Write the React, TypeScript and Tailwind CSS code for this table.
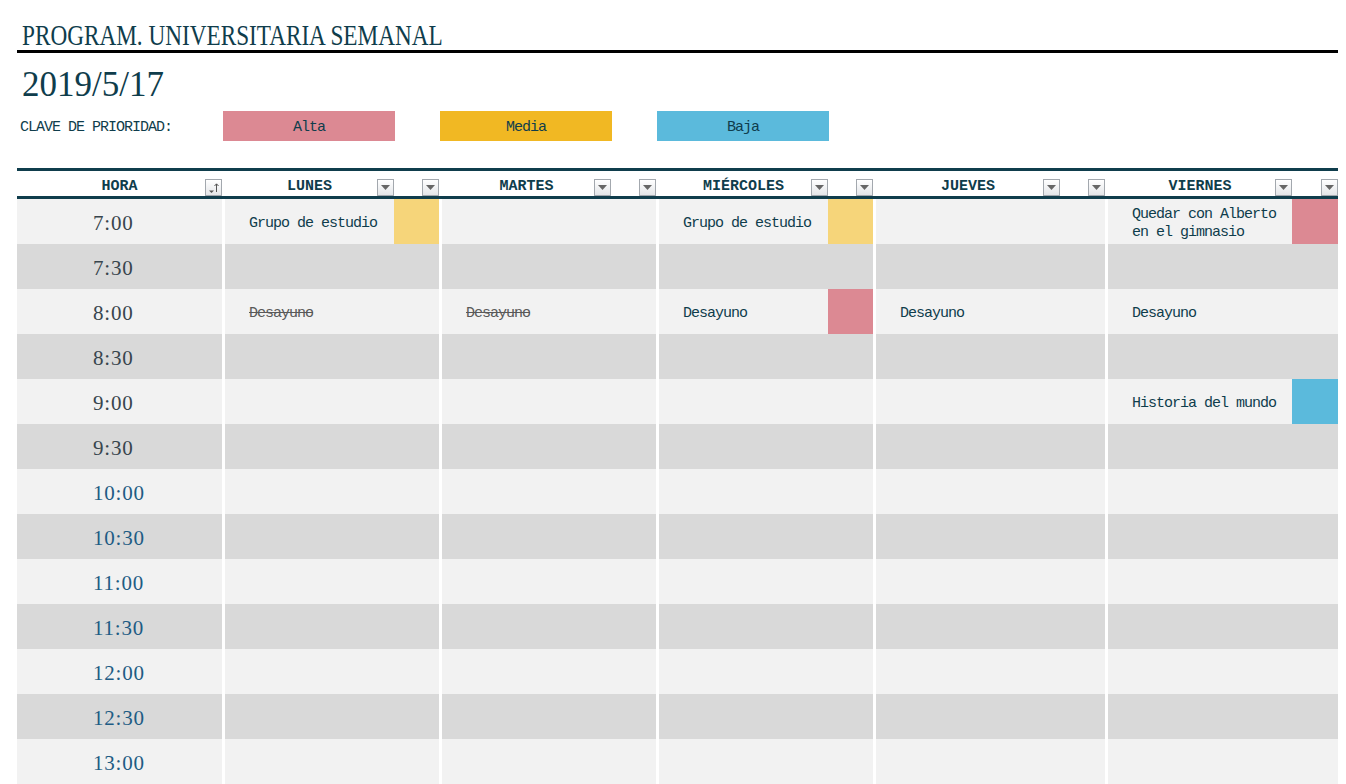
type Pri = 'alta' | 'media' | 'baja'
type Entry = { text: string; done?: boolean; pri?: Pri }
type Day = { name: string; textW: string; priW: string; entries: Record<number, Entry> }

const priBg: Record<Pri, string> = {
  alta: 'bg-[#dc8993]',
  media: 'bg-[#f6d57a]',
  baja: 'bg-[#5bbadc]',
}

const times = ['7:00', '7:30', '8:00', '8:30', '9:00', '9:30', '10:00', '10:30', '11:00', '11:30', '12:00', '12:30', '13:00']

const days: Day[] = [
  {
    name: 'LUNES', textW: 'w-[169px]', priW: 'w-[45px]',
    entries: { 0: { text: 'Grupo de estudio', pri: 'media' }, 2: { text: 'Desayuno', done: true } },
  },
  {
    name: 'MARTES', textW: 'w-[169px]', priW: 'w-[45px]',
    entries: { 2: { text: 'Desayuno', done: true } },
  },
  {
    name: 'MIÉRCOLES', textW: 'w-[169px]', priW: 'w-[45px]',
    entries: { 0: { text: 'Grupo de estudio', pri: 'media' }, 2: { text: 'Desayuno', pri: 'alta' } },
  },
  {
    name: 'JUEVES', textW: 'w-[184px]', priW: 'w-[45px]',
    entries: { 2: { text: 'Desayuno' } },
  },
  {
    name: 'VIERNES', textW: 'w-[184px]', priW: 'w-[46px]',
    entries: {
      0: { text: 'Quedar con Alberto\nen el gimnasio', pri: 'alta' },
      2: { text: 'Desayuno' },
      4: { text: 'Historia del mundo', pri: 'baja' },
    },
  },
]

function FilterButton({ sort }: { sort?: boolean }) {
  return (
    <div className="absolute right-0 bottom-0 w-[17px] h-[17px] border border-[#a3a8ae] bg-gradient-to-b from-white to-[#e4e6e9] flex items-center justify-center">
      {sort ? (
        <svg width="13" height="13" viewBox="0 0 13 13">
          <path d="M2 9.5h5l-2.5 2.5z" fill="#555" />
          <path d="M9.5 3v8" stroke="#555" strokeWidth="1" />
          <path d="M7.5 5l2-2.2 2 2.2" stroke="#555" strokeWidth="1" fill="none" />
        </svg>
      ) : (
        <svg width="9" height="5" viewBox="0 0 9 5">
          <path d="M0 0h9L4.5 5z" fill="#666" />
        </svg>
      )}
    </div>
  )
}

export default function App() {
  const mono = "font-['Liberation_Mono',monospace]"
  const serif = "font-['Liberation_Serif',serif]"

  return (
    <div className={`w-[1346px] h-[784px] overflow-hidden bg-white pl-[17px] pr-[8px] text-[#0f3d4c] ${mono}`}>
      {/* Title */}
      <div className="mt-[20px] h-[30px] pl-[5px] leading-[30px] whitespace-nowrap">
        <span className={`inline-block origin-left scale-x-[0.774] text-[30px] ${serif}`}>
          PROGRAM. UNIVERSITARIA SEMANAL
        </span>
      </div>
      <div className="h-[3px] bg-black" />

      {/* Date */}
      <div className={`mt-[14px] h-[35px] pl-[5px] text-[35px] leading-[35px] ${serif}`}>2019/5/17</div>

      {/* Priority key */}
      <div className="mt-[9px] flex h-[30px] items-center">
        <div className="w-[206px] pt-[5px] pl-[3px] text-[15px] tracking-[-1px]">CLAVE DE PRIORIDAD:</div>
        <div className="flex gap-[45px]">
          <div className="flex h-[30px] w-[172px] items-center justify-center bg-[#dc8993] pt-[5px] text-[15px] tracking-[-1px]">Alta</div>
          <div className="flex h-[30px] w-[172px] items-center justify-center bg-[#f1b823] pt-[5px] text-[15px] tracking-[-1px]">Media</div>
          <div className="flex h-[30px] w-[172px] items-center justify-center bg-[#5bbadc] pt-[5px] text-[15px] tracking-[-1px]">Baja</div>
        </div>
      </div>

      {/* Table header */}
      <div className="mt-[27px] flex h-[31px] gap-[3px] border-y-[3px] border-[#0f3d4c]">
        <div className="relative flex w-[205px] items-center justify-center pt-[7px] text-[15px] font-bold">
          HORA
          <FilterButton sort />
        </div>
        {days.map((d) => (
          <div key={d.name} className="flex">
            <div className={`relative flex ${d.textW} items-center justify-center pt-[7px] text-[15px] font-bold`}>
              {d.name}
              <FilterButton />
            </div>
            <div className={`relative ${d.priW}`}>
              <FilterButton />
            </div>
          </div>
        ))}
      </div>

      {/* Rows */}
      {times.map((t, i) => {
        const bg = i % 2 === 0 ? 'bg-[#f2f2f2]' : 'bg-[#d9d9d9]'
        const timeColor = i < 6 ? 'text-[#38454d]' : 'text-[#1e5c84]'
        return (
          <div key={t} className="flex h-[45px] gap-[3px]">
            <div className={`flex w-[205px] items-center pt-[4px] pl-[76px] text-[21px] tracking-[0.8px] ${serif} ${timeColor} ${bg}`}>{t}</div>
            {days.map((d) => {
              const e = d.entries[i]
              return (
                <div key={d.name} className={`flex ${bg}`}>
                  <div className={`flex ${d.textW} items-center whitespace-pre pt-[5px] pl-[24px] text-[15px] leading-[18px] tracking-[-1px]`}>
                    {e && (
                      <span className={e.done ? 'text-[#595959] line-through' : ''}>{e.text}</span>
                    )}
                  </div>
                  <div className={`${d.priW} ${e?.pri ? priBg[e.pri] : ''}`} />
                </div>
              )
            })}
          </div>
        )
      })}
    </div>
  )
}
